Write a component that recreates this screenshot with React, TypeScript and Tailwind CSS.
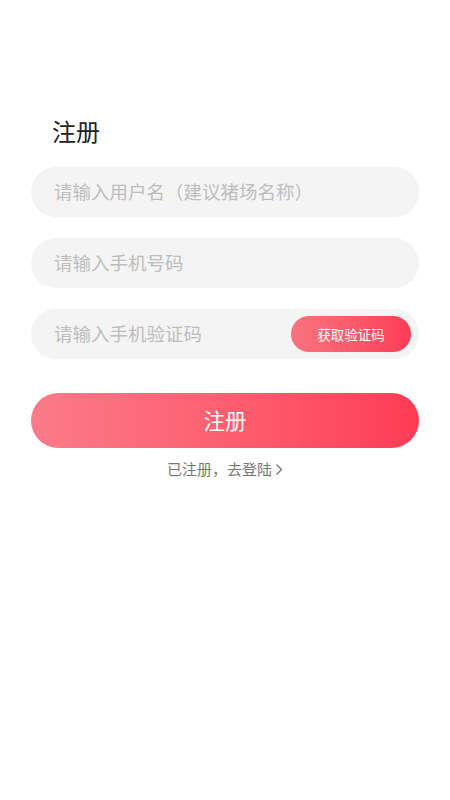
export default function App() {
  const font = { fontFamily: '"Noto Sans CJK SC", "Noto Sans", sans-serif' };
  return (
    <div className="w-[450px] h-[800px] bg-white" style={font}>
      <div className="px-[31px] pt-[113px]">
        <h1 className="pl-[21px] text-[24px] leading-[36px] text-[#222] font-normal">注册</h1>
        <div className="mt-[18px] flex flex-col gap-[21px]">
          <div className="h-[50px] rounded-full bg-[#f4f4f4] flex items-center pl-[23px] text-[18.5px] text-[#bdbdbd]">
            请输入用户名（建议猪场名称）
          </div>
          <div className="h-[50px] rounded-full bg-[#f4f4f4] flex items-center pl-[23px] text-[18.5px] text-[#bdbdbd]">
            请输入手机号码
          </div>
          <div className="h-[50px] rounded-full bg-[#f4f4f4] flex items-center justify-between pl-[23px] pr-[8px] text-[18.5px] text-[#bdbdbd]">
            <span>请输入手机验证码</span>
            <div className="w-[120px] h-[36px] rounded-full bg-gradient-to-r from-[#f8737f] to-[#fe3b55] flex items-center justify-center text-[13.5px] text-white">
              获取验证码
            </div>
          </div>
        </div>
        <div className="mt-[34px] h-[55px] rounded-full bg-gradient-to-r from-[#fb7a8a] to-[#fe3b54] flex items-center justify-center text-[21.5px] text-white">
          注册
        </div>
        <div className="mt-[10px] flex items-center justify-center text-[15px] text-[#777] gap-[3px]">
          <span>已注册，去登陆</span>
          <svg width="8" height="13" viewBox="0 0 8 13" fill="none">
            <path d="M1.5 1.5 L6.5 6.5 L1.5 11.5" stroke="#777" strokeWidth="1.4" />
          </svg>
        </div>
      </div>
    </div>
  );
}
